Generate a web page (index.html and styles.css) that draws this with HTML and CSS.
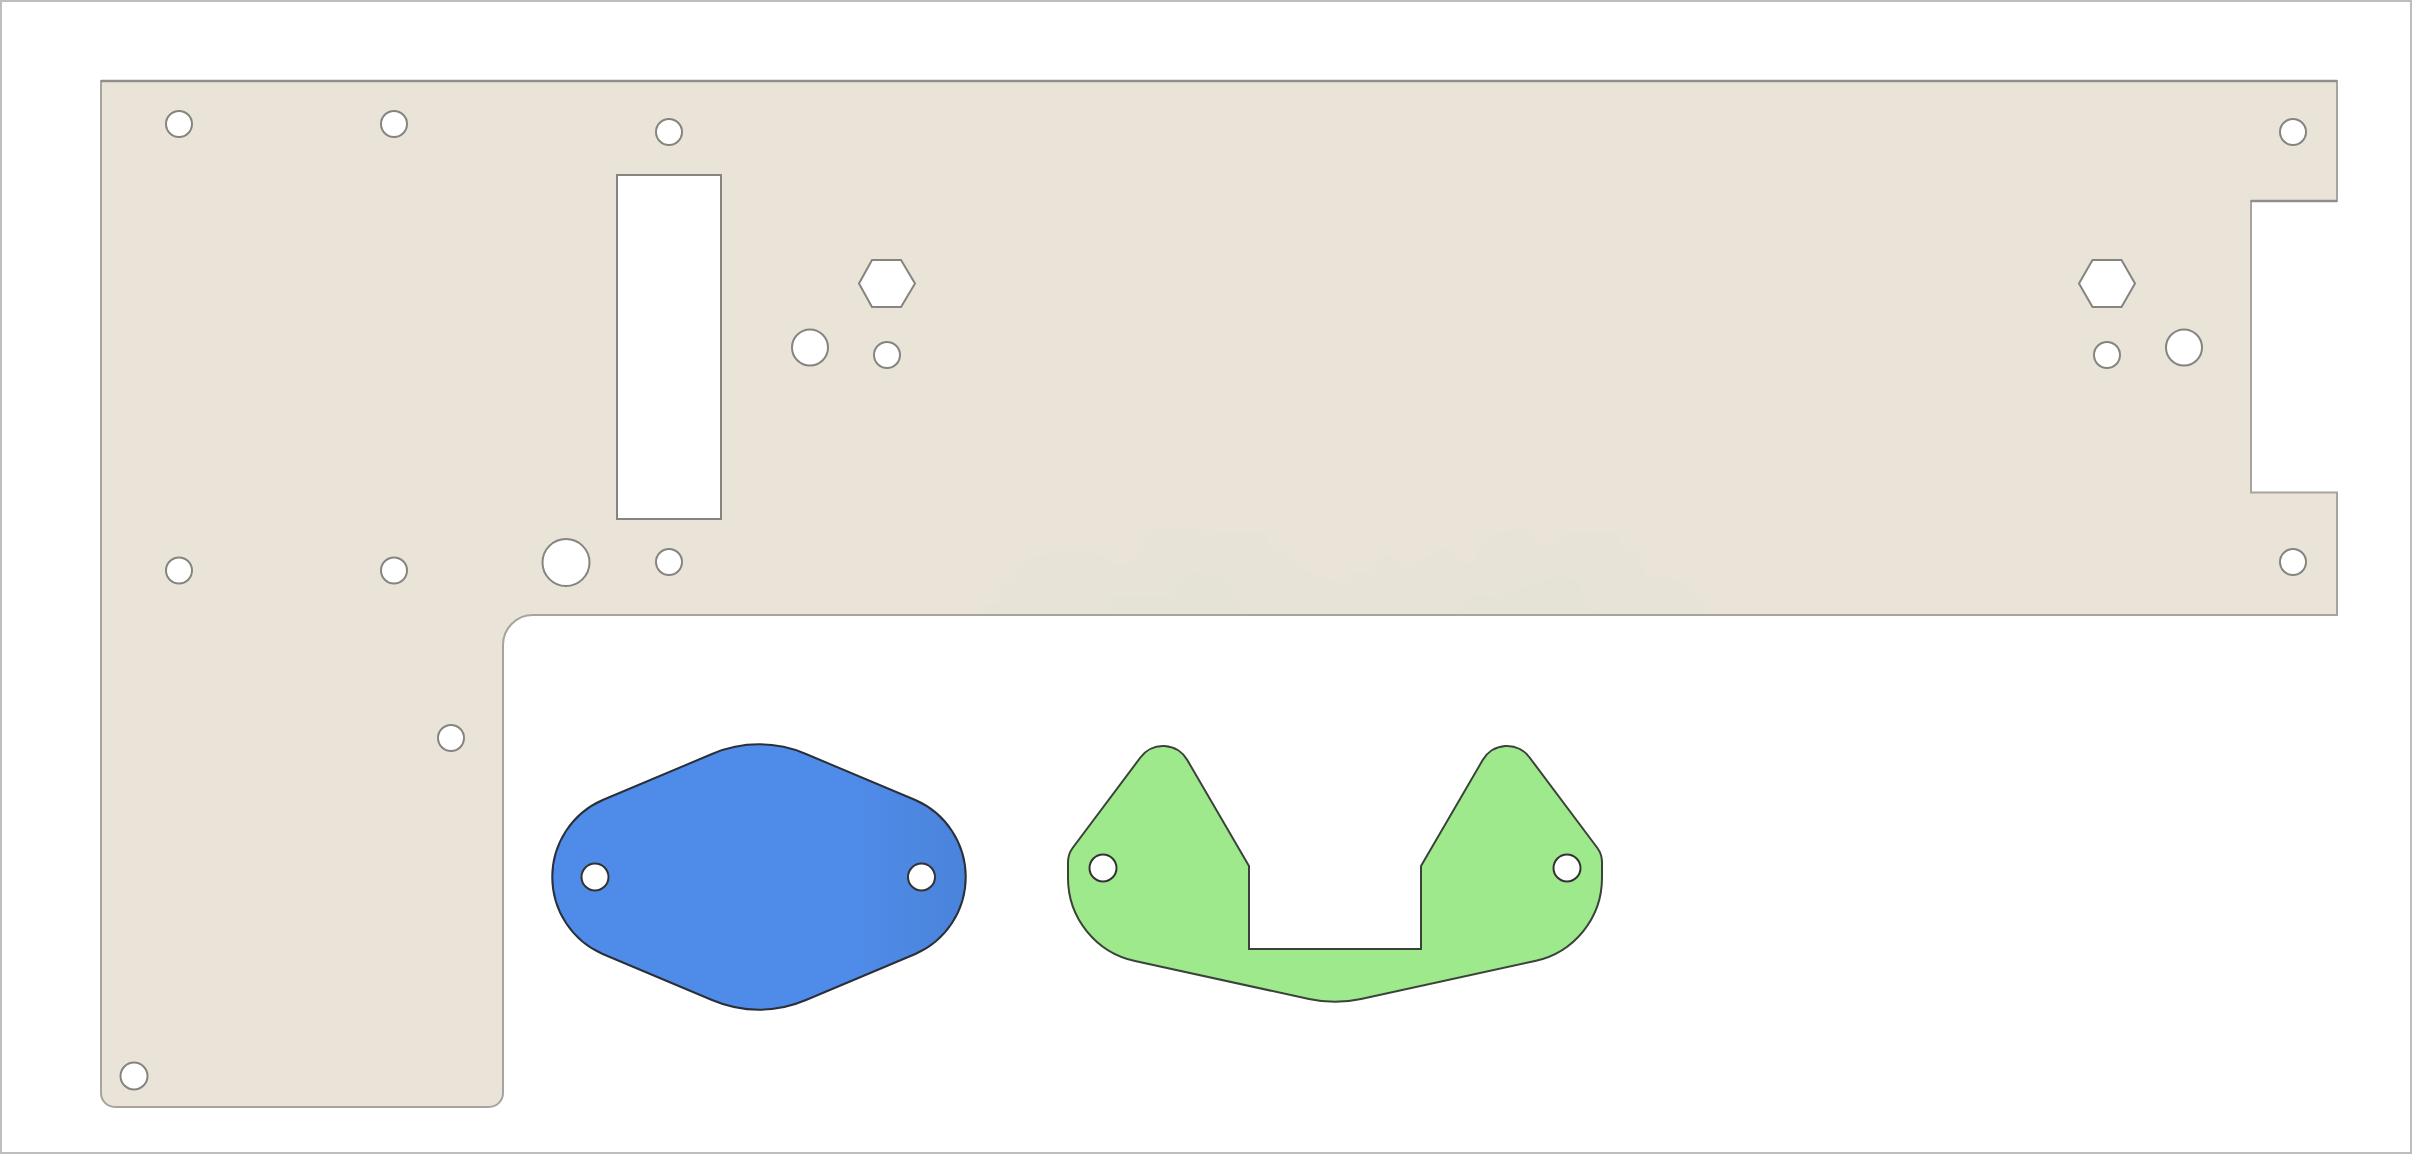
FILE: index.html
```html
<!DOCTYPE html>
<html lang="en">
<head>
<meta charset="utf-8">
<title>Flat parts layout</title>
<link rel="stylesheet" href="styles.css">
</head>
<body>
<main class="frame">
<svg class="drawing" viewBox="2 2 2408 1150" aria-label="Cut parts">
  <defs>
    <linearGradient id="blueShade" gradientUnits="userSpaceOnUse" x1="552" y1="877" x2="966" y2="877">
      <stop offset="0" stop-color="#4f8ce9"/>
      <stop offset="0.72" stop-color="#4f8ce9"/>
      <stop offset="1" stop-color="#4a83da"/>
    </linearGradient>
  </defs>

  <path class="panel" d="M101 81 H2337 V201 H2251 V492.5 H2337 V615 H533 A30 30 0 0 0 503 645 V1093 A14 14 0 0 1 489 1107 H115 A14 14 0 0 1 101 1093 Z"/>
  <g transform="translate(940 500) scale(.5102 .3333)">
    <path class="smudge" d="M85 340 L85 310 L115 310 L115 260 L140 255 L165 180 L220 160 L330 165 L340 195 L375 190 L420 90 L500 85 L520 110 L545 95 L640 95 L645 150 L675 150 L700 200 L780 250 L805 255 L810 215 L855 225 L860 180 L885 160 L910 205 L930 205 L935 175 L970 170 L990 140 L1020 195 L1045 190 L1060 130 L1100 95 L1150 85 L1165 130 L1200 130 L1240 95 L1330 100 L1335 150 L1365 150 L1385 230 L1430 230 L1470 270 L1505 340 Z"/>
    <path class="smudge-deep" d="M335 340 L340 290 L420 290 L460 290 L465 260 L490 215 L560 235 L575 300 L605 340 Z"/>
    <path class="smudge-deep" d="M1010 340 L1050 285 L1100 295 L1145 260 L1210 230 L1250 240 L1260 300 L1290 340 Z"/>
  </g>
  <path class="panel-top" d="M101 81 H2337"/>
  <path class="panel-top" d="M2251 201 H2337"/>

  <rect class="cut" x="617" y="175" width="104" height="344"/>
  <polygon class="cut" points="859,283.5 872,260 901,260 915,283.5 901,307 872,307"/>
  <polygon class="cut" points="2079,283.5 2092.5,260 2121.5,260 2135,283.5 2121.5,307 2092.5,307"/>

  <circle class="cut" cx="179" cy="124" r="13"/>
  <circle class="cut" cx="394" cy="124" r="13"/>
  <circle class="cut" cx="669" cy="132" r="13"/>
  <circle class="cut" cx="179" cy="570.5" r="13"/>
  <circle class="cut" cx="394" cy="570.5" r="13"/>
  <circle class="cut" cx="566" cy="562.5" r="23.5"/>
  <circle class="cut" cx="669" cy="562" r="13"/>
  <circle class="cut" cx="810" cy="347.5" r="18"/>
  <circle class="cut" cx="887" cy="355" r="13"/>
  <circle class="cut" cx="2107" cy="355" r="13"/>
  <circle class="cut" cx="2184" cy="347.5" r="18"/>
  <circle class="cut" cx="2293" cy="132" r="13"/>
  <circle class="cut" cx="2293" cy="562" r="13"/>
  <circle class="cut" cx="451" cy="738" r="13"/>
  <circle class="cut" cx="134" cy="1076" r="13.5"/>

  <path class="plate-blue" d="M602.7 800 L712 754 A119 119 0 0 1 806 754 L915.3 800 A84 84 0 0 1 915.3 954 L806 1000 A119 119 0 0 1 712 1000 L602.7 954 A84 84 0 0 1 602.7 800 Z"/>
  <circle class="hole" cx="595" cy="877" r="13.5"/>
  <circle class="hole" cx="921.5" cy="877" r="13.5"/>

  <path class="plate-green" d="M1140.4 757.5 A28 28 0 0 1 1187.3 760.1 L1249 866 V949 H1421 V866 L1482.7 760.1 A28 28 0 0 1 1529.6 757.5 L1597.4 848 A24 24 0 0 1 1602 862 V878 A85 85 0 0 1 1535 961 L1361 999 A122 122 0 0 1 1309 999 L1135 961 A85 85 0 0 1 1068 878 V862 A24 24 0 0 1 1072.6 848 Z"/>
  <circle class="hole" cx="1103" cy="868" r="13.5"/>
  <circle class="hole" cx="1567" cy="868" r="13.5"/>
</svg>
</main>
</body>
</html>
```
FILE: styles.css
```css
html, body {
  margin: 0;
  padding: 0;
  background: #fff;
}

.frame {
  box-sizing: border-box;
  width: 2412px;
  height: 1154px;
  border: 2px solid #bdbdbd;
  background: #fff;
  overflow: hidden;
}

.drawing {
  display: block;
  width: 2408px;
  height: 1150px;
  filter: blur(0.6px);
}

.panel {
  fill: #eae4d8;
  stroke: #a6a49c;
  stroke-width: 2;
}

.panel-top {
  fill: none;
  stroke: #8f8e8a;
  stroke-width: 2.6;
}

.smudge {
  fill: #e7e3d7;
}

.smudge-deep {
  fill: #e5e2d6;
}

.cut {
  fill: #fff;
  stroke: #85847f;
  stroke-width: 2;
}

.plate-blue {
  fill: url(#blueShade);
  stroke: #2a2f38;
  stroke-width: 2;
}

.plate-green {
  fill: #9de98c;
  stroke: #3a423a;
  stroke-width: 2;
}

.hole {
  fill: #fff;
  stroke: #333;
  stroke-width: 2;
}
```
